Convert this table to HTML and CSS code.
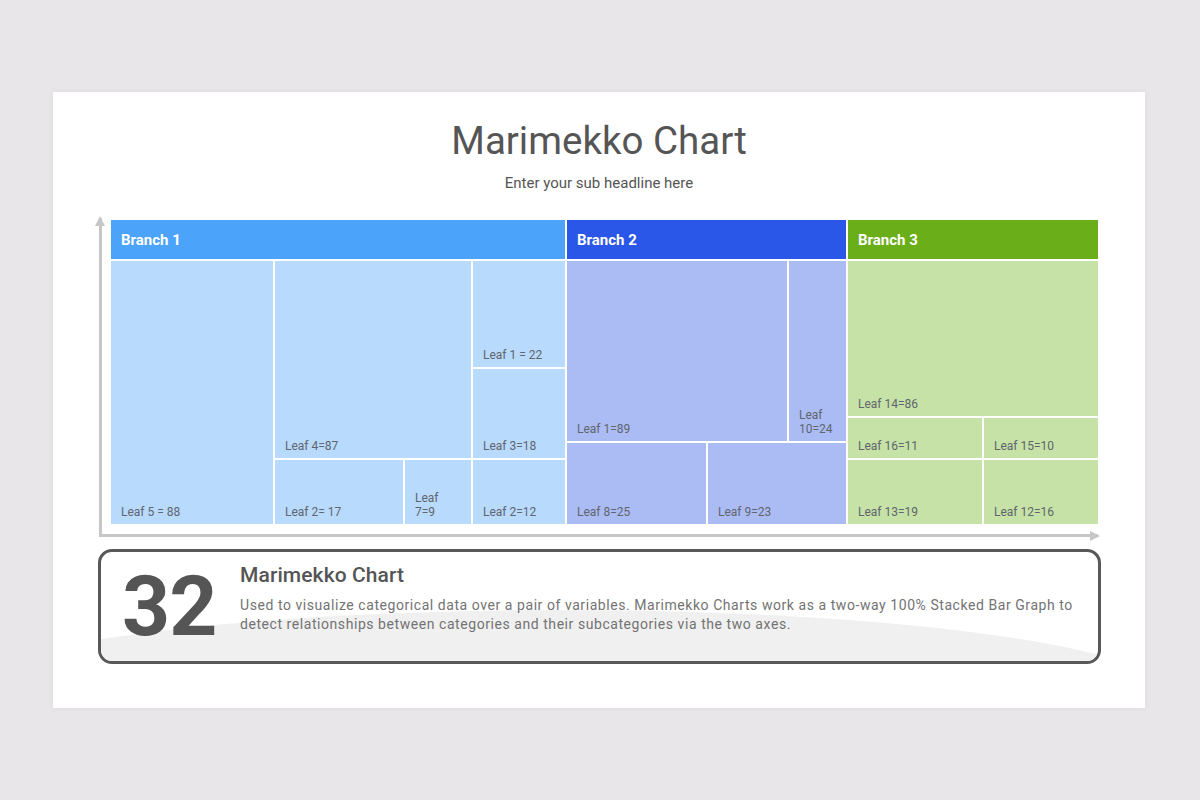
FILE: index.html
```html
<!DOCTYPE html>
<html lang="en">
<head>
<meta charset="utf-8">
<title>Marimekko Chart</title>
<link rel="stylesheet" href="styles.css">
</head>
<body>
<div class="slide">
  <h1 class="title">Marimekko Chart</h1>
  <p class="sub">Enter your sub headline here</p>
  <div class="axes">
    <div class="chart">
      <div class="branch b1">
        <div class="head">Branch 1</div>
        <div class="body g1">
          <div class="leaf l5"><span>Leaf 5 = 88</span></div>
          <div class="leaf l4"><span>Leaf 4=87</span></div>
          <div class="leaf l1"><span>Leaf 1 = 22</span></div>
          <div class="leaf l3"><span>Leaf 3=18</span></div>
          <div class="leaf l2a"><span>Leaf 2= 17</span></div>
          <div class="leaf l7"><span>Leaf<br>7=9</span></div>
          <div class="leaf l2b"><span>Leaf 2=12</span></div>
        </div>
      </div>
      <div class="branch b2">
        <div class="head">Branch 2</div>
        <div class="body g2">
          <div class="leaf m1"><span>Leaf 1=89</span></div>
          <div class="leaf m10"><span>Leaf<br>10=24</span></div>
          <div class="leaf m8"><span>Leaf 8=25</span></div>
          <div class="leaf m9"><span>Leaf 9=23</span></div>
        </div>
      </div>
      <div class="branch b3">
        <div class="head">Branch 3</div>
        <div class="body g3">
          <div class="leaf n14"><span>Leaf 14=86</span></div>
          <div class="leaf"><span>Leaf 16=11</span></div>
          <div class="leaf"><span>Leaf 15=10</span></div>
          <div class="leaf"><span>Leaf 13=19</span></div>
          <div class="leaf"><span>Leaf 12=16</span></div>
        </div>
      </div>
    </div>
  </div>
  <div class="card">
    <div class="num">32</div>
    <div class="info">
      <h2>Marimekko Chart</h2>
      <p>Used to visualize categorical data over a pair of variables. Marimekko Charts work as a two-way 100% Stacked Bar Graph to<br>detect relationships between categories and their subcategories via the two axes.</p>
    </div>
  </div>
</div>
</body>
</html>
```

FILE: styles.css
```css
html, body {
  margin: 0;
  padding: 0;
}
body {
  background: #e8e6e8;
  font-family: Roboto, "Liberation Sans", sans-serif;
  width: 1200px;
  height: 800px;
  overflow: hidden;
}
.slide {
  width: 1092px;
  height: 616px;
  margin: 92px 0 0 53px;
  background: #ffffff;
  box-sizing: border-box;
  padding-top: 25px;
  box-shadow: 0 0 6px rgba(0, 0, 0, 0.06);
}
.title {
  margin: 0;
  text-align: center;
  font-weight: 400;
  font-size: 38.5px;
  line-height: 48px;
  color: #555555;
}
.sub {
  margin: 8px 0 0;
  text-align: center;
  font-size: 15px;
  line-height: 20px;
  color: #555555;
}
.axes {
  position: relative;
  margin: 25px 0 0 46px;
  width: 999px;
  box-sizing: border-box;
  border-left: 3px solid #c6c6c6;
  border-bottom: 3px solid #c6c6c6;
  padding: 2px 0 10px 9px;
}
.axes::before {
  content: "";
  position: absolute;
  left: -7px;
  top: -2px;
  border-left: 5px solid transparent;
  border-right: 5px solid transparent;
  border-bottom: 10px solid #c6c6c6;
}
.axes::after {
  content: "";
  position: absolute;
  right: -2px;
  bottom: -7px;
  border-top: 5px solid transparent;
  border-bottom: 5px solid transparent;
  border-left: 10px solid #c6c6c6;
}
.chart {
  display: flex;
  gap: 2px;
  background: #ffffff;
}
.branch {
  display: flex;
  flex-direction: column;
  gap: 2px;
}
.b1 { width: 454px; }
.b2 { width: 279px; }
.b3 { width: 250px; }
.head {
  height: 39px;
  display: flex;
  align-items: center;
  padding-left: 10px;
  padding-top: 1px;
  box-sizing: border-box;
  color: #ffffff;
  font-weight: 700;
  font-size: 15px;
}
.b1 .head { background: #4ca3fa; }
.b2 .head { background: #2b57e9; }
.b3 .head { background: #6aae1a; }
.body {
  height: 263px;
  display: grid;
  gap: 2px;
}
.leaf {
  display: flex;
  align-items: flex-end;
  padding: 0 6px 5px 10px;
  font-size: 12px;
  line-height: 14px;
  color: #60656e;
  min-width: 0;
}
.b1 .leaf { background: #b8dafd; }
.b2 .leaf { background: #abbcf5; }
.b3 .leaf { background: #c6e2a6; }

.g1 {
  grid-template-columns: 162px 128px 66px 92px;
  grid-template-rows: 106px 89px 64px;
}
.l5 { grid-column: 1; grid-row: 1 / 4; }
.l4 { grid-column: 2 / 4; grid-row: 1 / 3; }
.l1 { grid-column: 4; grid-row: 1; }
.l3 { grid-column: 4; grid-row: 2; }
.l2a { grid-column: 2; grid-row: 3; }
.l7 { grid-column: 3; grid-row: 3; }
.l2b { grid-column: 4; grid-row: 3; }

.g2 {
  grid-template-columns: 139px 79px 57px;
  grid-template-rows: 180px 81px;
}
.m1 { grid-column: 1 / 3; grid-row: 1; }
.m10 { grid-column: 3; grid-row: 1; }
.m8 { grid-column: 1; grid-row: 2; }
.m9 { grid-column: 2 / 4; grid-row: 2; }

.g3 {
  grid-template-columns: 134px 114px;
  grid-template-rows: 155px 40px 64px;
}
.n14 { grid-column: 1 / 3; }

.card {
  position: relative;
  overflow: hidden;
  margin: 12px 0 0 45px;
  width: 1003px;
  height: 115px;
  box-sizing: border-box;
  border: 3px solid #585858;
  border-radius: 14px;
  padding: 11px 20px 0 21px;
  display: flex;
  align-items: flex-start;
}
.card::before {
  content: "";
  position: absolute;
  left: -150px;
  top: 58px;
  width: 1220px;
  height: 170px;
  border-radius: 50%;
  background: #f0f0f0;
}
.num {
  position: relative;
  z-index: 1;
  flex: none;
  width: 118px;
  margin-top: 2px;
  font-weight: 700;
  font-size: 84px;
  line-height: 84px;
  color: #555555;
  letter-spacing: -1px;
}
.info {
  position: relative;
  z-index: 1;
  flex: 1;
}
.info h2 {
  margin: 0;
  font-weight: 500;
  font-size: 21px;
  line-height: 24px;
  color: #555555;
  letter-spacing: 0.1px;
}
.info p {
  margin: 9px 0 0;
  font-size: 14px;
  line-height: 19px;
  color: #737373;
  letter-spacing: 0.56px;
  white-space: nowrap;
}
```
